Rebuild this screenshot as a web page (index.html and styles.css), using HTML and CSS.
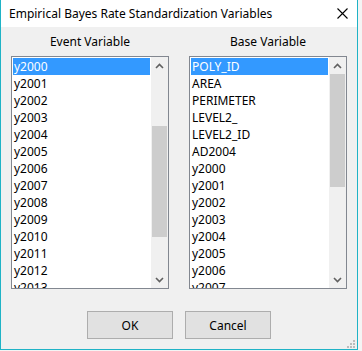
FILE: index.html
```html
<!DOCTYPE html>
<html lang="en">
<head>
    <meta charset="UTF-8">
    <title>Empirical Bayes Rate Standardization Variables</title>
    <link rel="stylesheet" href="styles.css">
</head>
<body>
    <div class="window">
        <div class="titlebar">
            <span class="title">Empirical Bayes Rate Standardization Variables</span>
            <svg class="close" width="11" height="11" viewBox="0 0 11 11"><path d="M0.5 0.5L10.5 10.5M10.5 0.5L0.5 10.5" stroke="#000" stroke-width="1.1" fill="none"/></svg>
        </div>
        <div class="content">
            <div class="columns">
                <div class="column">
                    <div class="label">Event Variable</div>
                    <div class="listbox">
                        <ul class="items">
                            <li class="selected">y2000</li>
                            <li>y2001</li>
                            <li>y2002</li>
                            <li>y2003</li>
                            <li>y2004</li>
                            <li>y2005</li>
                            <li>y2006</li>
                            <li>y2007</li>
                            <li>y2008</li>
                            <li>y2009</li>
                            <li>y2010</li>
                            <li>y2011</li>
                            <li>y2012</li>
                            <li>y2013</li>
                        </ul>
                        <div class="scrollbar">
                            <div class="arrow"><svg width="9" height="6" viewBox="0 0 9 6"><path d="M1 5L4.5 1.5L8 5" stroke="#606060" stroke-width="1.6" fill="none"/></svg></div>
                            <div class="track"><div class="thumb" style="margin-top: 52px; height: 111px;"></div></div>
                            <div class="arrow"><svg width="9" height="6" viewBox="0 0 9 6"><path d="M1 1L4.5 4.5L8 1" stroke="#606060" stroke-width="1.6" fill="none"/></svg></div>
                        </div>
                    </div>
                </div>
                <div class="column">
                    <div class="label">Base Variable</div>
                    <div class="listbox">
                        <ul class="items">
                            <li class="selected">POLY_ID</li>
                            <li>AREA</li>
                            <li>PERIMETER</li>
                            <li>LEVEL2_</li>
                            <li>LEVEL2_ID</li>
                            <li>AD2004</li>
                            <li>y2000</li>
                            <li>y2001</li>
                            <li>y2002</li>
                            <li>y2003</li>
                            <li>y2004</li>
                            <li>y2005</li>
                            <li>y2006</li>
                            <li>y2007</li>
                        </ul>
                        <div class="scrollbar">
                            <div class="arrow"><svg width="9" height="6" viewBox="0 0 9 6"><path d="M1 5L4.5 1.5L8 5" stroke="#606060" stroke-width="1.6" fill="none"/></svg></div>
                            <div class="track"><div class="thumb" style="margin-top: 0px; height: 113px;"></div></div>
                            <div class="arrow"><svg width="9" height="6" viewBox="0 0 9 6"><path d="M1 1L4.5 4.5L8 1" stroke="#606060" stroke-width="1.6" fill="none"/></svg></div>
                        </div>
                    </div>
                </div>
            </div>
            <div class="buttons">
                <button class="btn">OK</button>
                <button class="btn">Cancel</button>
            </div>
        </div>
        <svg class="grip" width="9" height="9" viewBox="0 0 9 9">
            <rect x="6" y="0" width="2" height="2" fill="#bcbcbc"/>
            <rect x="3" y="3" width="2" height="2" fill="#bcbcbc"/>
            <rect x="6" y="3" width="2" height="2" fill="#bcbcbc"/>
            <rect x="0" y="6" width="2" height="2" fill="#bcbcbc"/>
            <rect x="3" y="6" width="2" height="2" fill="#bcbcbc"/>
            <rect x="6" y="6" width="2" height="2" fill="#bcbcbc"/>
        </svg>
    </div>
</body>
</html>
```

FILE: styles.css
```css
body { margin: 0; background-color: #f4f4f4; font-family: "Noto Sans", sans-serif; font-size: 12px; color: #000; }
.window { position: relative; width: 358px; height: 350px; box-sizing: border-box; background-color: #f0f0f0; border: 1px solid #1fb3c6; border-top: none; display: flex; flex-direction: column; }
.titlebar { height: 27px; background-color: #fff; display: flex; align-items: center; justify-content: space-between; padding: 0 9px 0 8px; flex-shrink: 0; }
.title { font-size: 12px; }
.content { flex: 1; padding: 0 10px; display: flex; flex-direction: column; }
.columns { display: flex; gap: 20px; }
.column { width: 158px; }
.label { height: 29px; line-height: 29px; text-align: center; }
.listbox { height: 233px; box-sizing: border-box; border: 1px solid #828790; background-color: #fff; display: flex; overflow: hidden; }
.items { list-style: none; margin: 0; padding: 1px; flex: 1; overflow: hidden; }
.items li { height: 17px; line-height: 17px; padding-left: 1px; white-space: nowrap; }
.items li.selected { background-color: #3399ff; color: #fff; }
.scrollbar { width: 17px; background-color: #f0f0f0; display: flex; flex-direction: column; }
.arrow { height: 17px; display: flex; align-items: center; justify-content: center; }
.track { flex: 1; }
.thumb { background-color: #cdcdcd; margin: 0 1px; }
.buttons { display: flex; justify-content: center; gap: 12px; margin-top: 22px; }
.btn { width: 86px; height: 28px; background-color: #e1e1e1; border: 1px solid #adadad; font-family: "Noto Sans", sans-serif; font-size: 12px; color: #000; padding: 0; }
.grip { position: absolute; right: 1px; bottom: 0px; }
```
